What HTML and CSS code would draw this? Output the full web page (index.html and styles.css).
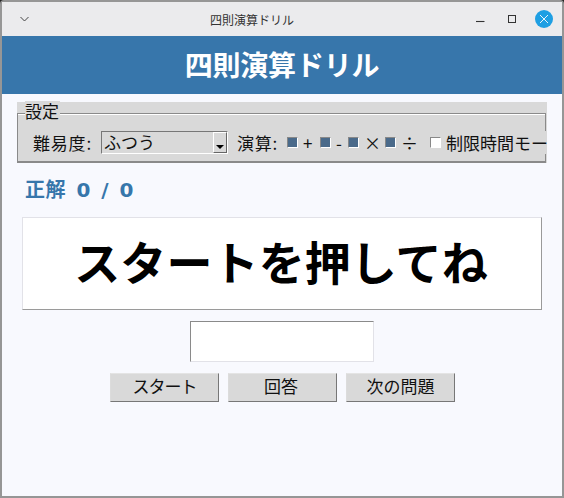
FILE: index.html
```html
<!DOCTYPE html>
<html lang="ja">
<head>
<meta charset="utf-8">
<title>四則演算ドリル</title>
<link rel="stylesheet" href="styles.css">
</head>
<body>
<div class="window">
  <div class="titlebar">
    <svg class="chevron" width="9" height="6" viewBox="0 0 9 6"><path d="M0.5 1 L4.5 5 L8.5 1" fill="none" stroke="#444" stroke-width="1"/></svg>
    <span class="title">四則演算ドリル</span>
    <div class="winbtns">
      <svg width="12" height="12" viewBox="0 0 12 12"><path d="M2 8.5 H10.5" stroke="#333" stroke-width="1.1"/></svg>
      <svg width="12" height="12" viewBox="0 0 12 12"><rect x="2.5" y="2.5" width="7" height="7" fill="none" stroke="#333" stroke-width="1"/></svg>
      <svg class="close" width="18" height="18" viewBox="0 0 18 18"><circle cx="9" cy="9" r="9" fill="#1e9fe3"/><path d="M5 5 L13 13 M13 5 L5 13" stroke="#fff" stroke-width="0.9"/></svg>
    </div>
  </div>
  <header class="banner">四則演算ドリル</header>
  <main class="content">
    <section class="settings">
      <span class="legend">設定</span>
      <div class="frame">
        <div class="row">
          <span class="lbl-level">難易度:</span>
          <div class="select"><span class="select-text">ふつう</span><span class="arrow"><i></i></span></div>
          <span class="lbl-op">演算:</span>
          <span class="check on"></span><span class="op op-plus">+</span>
          <span class="check on"></span><span class="op op-minus">-</span>
          <span class="check on"></span><span class="op op-x">×</span>
          <span class="check on"></span><span class="op op-div">÷</span>
          <span class="check off"></span><span class="timed">制限時間モード</span>
        </div>
      </div>
    </section>
    <div class="score">正解 0 / 0</div>
    <div class="display">スタートを押してね</div>
    <div class="answer"></div>
    <div class="buttons">
      <button class="btn btn-start">スタート</button>
      <button class="btn btn-answer">回答</button>
      <button class="btn">次の問題</button>
    </div>
  </main>
</div>
</body>
</html>
```
FILE: styles.css
```css
* { box-sizing: border-box; }
html, body { margin: 0; padding: 0; height: 100%; }
body { font-family: "Noto Sans CJK JP", "Noto Sans", sans-serif; overflow: hidden; background: #222; }
.window { width: 564px; height: 498px; padding: 2px; background: #969696; border-radius: 4px 4px 0 0; display: flex; flex-direction: column; }
.titlebar { height: 34px; flex: none; background: #ebebed; display: flex; align-items: center; position: relative; padding: 0 18px; }
.chevron { display: block; }
.title { position: absolute; left: 0; right: 60px; text-align: center; font-size: 12px; color: #333; }
.winbtns { margin-left: auto; margin-right: -9px; display: flex; align-items: center; gap: 20px; position: relative; }
.winbtns svg { display: block; }
.winbtns .close { margin-left: -3px; }
.banner { height: 58px; flex: none; background: #3776ab; color: #fff; font-weight: 700; font-size: 28px; line-height: 56px; text-align: center; letter-spacing: -0.2px; }
.content { flex: 1; background: #f8f9fe; padding: 8px 0 0 15px; display: flex; flex-direction: column; }
.settings { width: 530px; height: 61px; background: #d9d9d9; padding-top: 11px; position: relative; }
.legend { position: absolute; left: 8px; top: -1px; padding-right: 1px; background: #d9d9d9; font-size: 17px; line-height: 20px; color: #111; }
.frame { width: 529px; height: 50px; border: 1px solid #8a8a8a; border-bottom-width: 2px; box-shadow: inset 0 1px 0 #fff; padding-top: 17px; }
.row { width: 529px; height: 23px; background: #d9d9d9; display: flex; align-items: center; padding-left: 15px; padding-bottom: 1px; overflow-x: clip; overflow-y: visible; white-space: nowrap; font-size: 17px; color: #111; }
.lbl-level { width: 68px; flex: none; letter-spacing: 0.8px; }
.select { width: 127px; height: 23px; margin-bottom: -1px; flex: none; display: flex; border: 1px solid; border-color: #777 #fff #fff #777; }
.select-text { flex: 1; align-self: center; margin-bottom: 2px; font-size: 17px; padding-left: 2px; }
.arrow { width: 14px; border: 1px solid; border-color: #fff #666 #666 #fff; position: relative; }
.arrow i { position: absolute; left: 2px; bottom: 3px; width: 0; height: 0; border: 4px solid transparent; border-top: 4px solid #000; border-bottom: 0; }
.lbl-op { margin-left: 9px; width: 50px; flex: none; letter-spacing: 0.8px; }
.check { width: 11px; height: 11px; flex: none; border: 1px solid #fff; border-left-color: #888; border-top-color: #888; }
.check.on { background: #4a6a8a; }
.check.off { background: #fff; }
.op { flex: none; padding-left: 5px; }
.op-plus { width: 22px; }
.op-minus { width: 17px; }
.op-x { width: 26px; }
.op-div { width: 34px; }
.timed { margin-left: 5px; }
.score { margin: 14px 0 0 8px; font-size: 20px; font-weight: 700; line-height: 26px; color: #3776ab; font-family: "DejaVu Sans", "Noto Sans CJK JP", sans-serif; word-spacing: 3px; letter-spacing: 0.5px; }
.display { margin: 14px 0 0 5px; width: 520px; height: 93px; background: #fff; border: 1px solid #e2e2e8; border-bottom-color: #9a9a9a; border-right-color: #9a9a9a; text-align: center; font-size: 46px; font-weight: 700; line-height: 85px; letter-spacing: 0.1px; padding-right: 2px; color: #000; white-space: nowrap; }
.answer { margin: 11px 0 0 173px; width: 184px; height: 41px; background: #fff; border: 1px solid #e2e2e8; border-top-color: #8a8a8a; border-left-color: #8a8a8a; }
.buttons { margin: 11px 0 0 93px; display: flex; gap: 9px; }
.btn { width: 109px; height: 29px; padding: 0 0 3px; background: #d9d9d9; border: 1px solid; border-color: #e4e4e4 #777 #777 #dcdcdc; font-family: inherit; font-size: 17px; line-height: 24px; color: #111; }
.btn-start { letter-spacing: -1px; }
.btn-answer { padding-right: 3px; }
```
